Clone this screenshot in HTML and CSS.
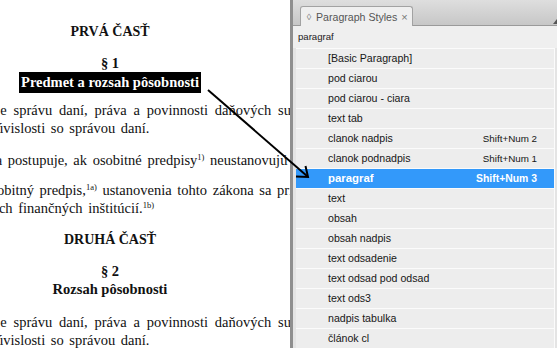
FILE: index.html
```html
<!DOCTYPE html>
<html lang="sk">
<head>
<meta charset="utf-8">
<title>Paragraph Styles</title>
<link rel="stylesheet" href="styles.css">
</head>
<body>
<div class="screen">
  <div class="doc">
    <div class="part part-1">PRVÁ ČASŤ</div>
    <div class="sec sec-1">§ 1</div>
    <div class="title title-1"><span class="hl">Predmet a rozsah pôsobnosti</span></div>
    <div class="para para-1">
      <div class="line i1">upravuje správu daní, práva a povinnosti daňových subjektov</div>
      <div class="line i2">v súvislosti so správou daní.</div>
    </div>
    <div class="para para-2">
      <div class="line i3">sa postupuje, ak osobitné predpisy<sup>1)</sup> neustanovujú inak.</div>
    </div>
    <div class="para para-3">
      <div class="line i4">osobitný predpis,<sup>1a)</sup> ustanovenia tohto zákona sa primerane</div>
      <div class="line i5">ostatných finančných inštitúcií.<sup>1b)</sup></div>
    </div>
    <div class="part part-2">DRUHÁ ČASŤ</div>
    <div class="sec sec-2">§ 2</div>
    <div class="title title-2">Rozsah pôsobnosti</div>
    <div class="para para-4">
      <div class="line i1">upravuje správu daní, práva a povinnosti daňových subjektov</div>
      <div class="line i2">v súvislosti so správou daní.</div>
    </div>
  </div>

  <div class="panel">
    <div class="tabbar">
      <div class="tab"><span class="tab-ico">◊</span><span class="tab-name">Paragraph Styles</span><span class="tab-x">×</span></div>
      <span class="menu-tri"></span>
    </div>
    <div class="filter">paragraf</div>
    <div class="listwrap">
      <ul class="list">
        <li class="row"><span class="name">[Basic Paragraph]</span></li>
        <li class="row"><span class="name">pod ciarou</span></li>
        <li class="row"><span class="name">pod ciarou - ciara</span></li>
        <li class="row"><span class="name">text tab</span></li>
        <li class="row"><span class="name">clanok nadpis</span><span class="key">Shift+Num 2</span></li>
        <li class="row"><span class="name">clanok podnadpis</span><span class="key">Shift+Num 1</span></li>
        <li class="row selected"><span class="name">paragraf</span><span class="key">Shift+Num 3</span></li>
        <li class="row"><span class="name">text</span></li>
        <li class="row"><span class="name">obsah</span></li>
        <li class="row"><span class="name">obsah nadpis</span></li>
        <li class="row"><span class="name">text odsadenie</span></li>
        <li class="row"><span class="name">text odsad pod odsad</span></li>
        <li class="row"><span class="name">text ods3</span></li>
        <li class="row"><span class="name">nadpis tabulka</span></li>
        <li class="row"><span class="name">článok cl</span></li>
      </ul>
    </div>
  </div>

  <svg class="arrow" width="557" height="348" viewBox="0 0 557 348">
    <line x1="208" y1="90" x2="307" y2="176" stroke="#000" stroke-width="2"/>
    <polyline points="296,176.5 308,177 305.5,166" fill="none" stroke="#000" stroke-width="2"/>
  </svg>
</div>
</body>
</html>
```

FILE: styles.css
```css
* { box-sizing: border-box; }

html, body {
  margin: 0;
  padding: 0;
  background: #ffffff;
}

.screen {
  position: relative;
  display: flex;
  width: 557px;
  height: 348px;
  overflow: hidden;
  background: #ffffff;
}

/* ---------- document ---------- */
.doc {
  flex: none;
  width: 290px;
  height: 348px;
  overflow: hidden;
  font-family: "Liberation Serif", "Times New Roman", serif;
  font-size: 14.5px;
  color: #111;
}

.part,
.sec,
.title {
  width: 220px;
  text-align: center;
  font-weight: bold;
  line-height: 18px;
  white-space: nowrap;
}

.part { font-size: 14px; }

.part-1 { margin-top: 23px; }
.sec-1 { margin-top: 13px; }
.title-1 { line-height: 21px; }

.hl {
  display: inline-block;
  background: #000;
  color: #fff;
  padding: 0 2px;
  line-height: 21px;
}

.para-1 { margin-top: 8px; }
.para-2 { margin-top: 14px; }
.para-3 { margin-top: 12px; }

.part-2 { margin-top: 14px; }
.sec-2 { margin-top: 14px; line-height: 17px; }
.title-2 { line-height: 18px; }
.para-4 { margin-top: 15px; }

.line {
  line-height: 18px;
  white-space: nowrap;
  word-spacing: 2px;
}

.line sup {
  font-size: 8.5px;
  line-height: 0;
  vertical-align: 5px;
  word-spacing: 0;
}

.i1 { text-indent: -44px; word-spacing: 3.2px; }
.i2 { text-indent: -22.5px; }
.i3 { text-indent: -10px; }
.i4 { text-indent: -16px; }
.i5 { text-indent: -43px; }

/* ---------- panel ---------- */
.panel {
  flex: none;
  width: 267px;
  height: 348px;
  display: flex;
  flex-direction: column;
  background: #e9e9e9;
  border-left: 3px solid #8f8f8f;
  font-family: "Liberation Sans", Arial, sans-serif;
  color: #1d1d1d;
}

.tabbar {
  position: relative;
  flex: none;
  height: 26px;
  display: flex;
  align-items: flex-end;
  padding-left: 7px;
  background: linear-gradient(#dedede, #c7c7c7);
  border-bottom: 1px solid #9a9a9a;
}

.tab {
  width: 113px;
  height: 20px;
  margin-bottom: -1px;
  display: flex;
  align-items: center;
  gap: 3px;
  padding-left: 4px;
  background: #efefef;
  border: 1px solid #a2a2a2;
  border-bottom: none;
  border-radius: 3px 3px 0 0;
  font-size: 10.6px;
  color: #555;
  white-space: nowrap;
}

.tab-ico {
  font-size: 9px;
  color: #777;
  width: 8px;
  text-align: center;
}

.tab-x {
  font-size: 11px;
  color: #777;
  margin-left: 1px;
}

.menu-tri {
  position: absolute;
  right: 0;
  top: 19px;
  width: 0;
  height: 0;
  border-left: 4px solid transparent;
  border-bottom: 5px solid #555;
}

.filter {
  flex: none;
  height: 22px;
  line-height: 22px;
  padding-left: 5px;
  background: #efefef;
  font-size: 9.6px;
  color: #1a1a1a;
}

.listwrap {
  flex: 1;
  padding-left: 3px;
  background: #e4e4e4;
}

.list {
  list-style: none;
  margin: 0;
  padding: 0;
  width: 259px;
  border-top: 1px solid #fbfbfb;
  border-right: 1px solid #fbfbfb;
  background: #ededed;
}

.row {
  display: flex;
  justify-content: space-between;
  align-items: center;
  height: 20px;
  padding: 0 17px 1px 32px;
  border-bottom: 1px solid #fbfbfb;
  font-size: 10.6px;
  color: #161616;
}

.key {
  font-size: 9.8px;
}

.row.selected {
  background: #3399fa;
  color: #fff;
  font-weight: bold;
}

.row.selected .name { font-size: 11.4px; }
.row.selected .key { font-size: 10.4px; }

/* ---------- arrow overlay ---------- */
.arrow {
  position: absolute;
  left: 0;
  top: 0;
  pointer-events: none;
}
```
